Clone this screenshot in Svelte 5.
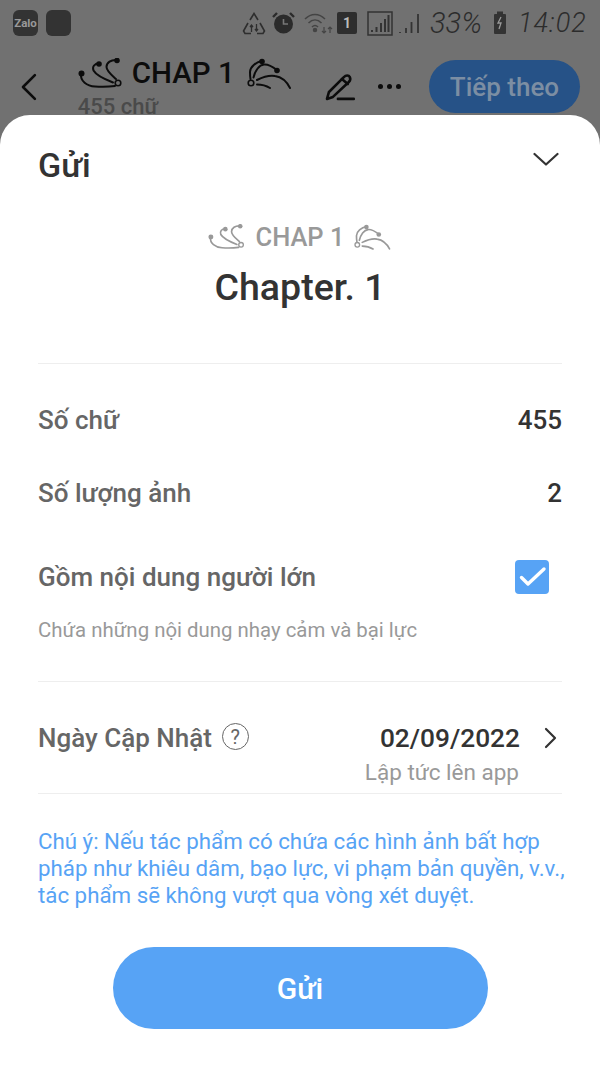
<script lang="ts">
	const rows = [
		{ label: "Số chữ", value: "455" },
		{ label: "Số lượng ảnh", value: "2" }
	];
</script>

{#snippet flourishLeft(w, h)}
	<svg class="flourish" width={w} height={h} viewBox="0 0 46 31" fill="none" stroke="currentColor" stroke-width="2" stroke-linecap="round">
		<circle cx="3.500" cy="15.500" r="3" fill="currentColor" stroke="none" />
		<path d="M3 16c-1 7 6 12 14 12.500 7 .5 14 .3 20-.5" />
		<circle cx="21" cy="6" r="2.800" fill="currentColor" stroke="none" />
		<path d="M21 5.500c-4.500 0-7 3-5.500 7C18 17 26 21 35 24.500" />
		<circle cx="39" cy="2.500" r="2.800" fill="currentColor" stroke="none" />
		<path d="M39 2c-6-.5-10.500 2.500-10.500 7 0 4 5 8 9.500 12" />
		<circle cx="40" cy="25" r="2.800" stroke-width="1.600" />
	</svg>
{/snippet}

{#snippet flourishRight(w, h)}
	<svg class="flourish" width={w} height={h} viewBox="0 0 46 31" fill="none" stroke="currentColor" stroke-width="2" stroke-linecap="round">
		<circle cx="15" cy="3.500" r="2.800" fill="currentColor" stroke="none" />
		<path d="M15 3C9 4 3 9 3 14c0 3 0 5 .5 7" />
		<circle cx="30" cy="12.500" r="2.800" fill="currentColor" stroke="none" />
		<path d="M30 12c-4-3-9-6-13-5.500C12 7 8 13 6.500 19.500" />
		<path d="M10 22c6-3 12-5 18-4 7 1 12 6 15 12" />
		<path d="M10 26.500c5 0 9 1 13 3.500" />
		<circle cx="4" cy="25" r="2.800" stroke-width="1.600" />
	</svg>
{/snippet}

<div class="screen">
	<div class="status">
		<div class="status-left">
			<span class="app-icon">Zalo</span>
			<span class="app-icon square"></span>
		</div>
		<div class="status-right">
			<svg class="recycle" width="24" height="23" viewBox="0 0 24 23" fill="none" stroke="#2e2e2e" stroke-width="1.600">
				<path d="M8 8l4-6.500L16 8M6 11l-4.500 8 1.500 2.500h6M18 11l4.500 8-1.500 2.500h-6" />
				<path d="M9.500 20v-7M8 15l1.500-2 1.500 2M14.500 12v7M13 17l1.500 2 1.500-2" stroke-width="1.300" />
			</svg>
			<svg class="alarm" width="23" height="24" viewBox="0 0 23 24">
				<circle cx="11.500" cy="13" r="9.500" fill="#2b2b2b" />
				<path d="M1 6l4-4M22 6l-4-4" stroke="#2b2b2b" stroke-width="2.400" />
				<path d="M11.500 8v5h4.500" stroke="#777" stroke-width="1.600" fill="none" />
			</svg>
			<svg class="wifi" width="29" height="22" viewBox="0 0 29 22" fill="none" stroke="#444" stroke-width="1.500">
				<path d="M1 7c6-6 14-6 20 0M4.500 11c4-4 9-4 13 0M8 15c2-2 4-2 6 0" />
				<circle cx="11" cy="18" r="1.500" fill="#444" />
				<path d="M20 15v6M18 19l2 2 2-2M26 21v-6M24 17l2-2 2 2" stroke-width="1.200" />
			</svg>
			<span class="sim">1</span>
			<svg class="bars" width="26" height="25" viewBox="0 0 26 25" fill="none">
				<rect x="1" y="1" width="24" height="23" stroke="#333" stroke-width="1.500" />
				<path d="M5 21v-2M9.500 21v-5M14 21v-9M18 21V8M21.500 21V4" stroke="#333" stroke-width="2" />
			</svg>
			<svg class="signal" width="22" height="24" viewBox="0 0 22 24" fill="none" stroke="#333" stroke-width="1.800">
				<path d="M2 22v-1M8 22v-5M13.500 22V11M20 22V3" />
			</svg>
			<span class="hand pct">33%</span>
			<svg class="battery" width="14" height="24" viewBox="0 0 14 24">
				<rect x="1" y="3" width="12" height="20" rx="1" fill="#333" />
				<rect x="4" y="0.500" width="6" height="3" fill="#333" />
				<path d="M8 6l-3 6h3l-2 6" stroke="#999" stroke-width="1.300" fill="none" />
			</svg>
			<span class="hand time">14:02</span>
		</div>
	</div>

	<nav class="topbar">
		<svg class="back" width="18" height="28" viewBox="0 0 18 28" fill="none" stroke="#0c0c0c" stroke-width="2.600" stroke-linecap="round" stroke-linejoin="round">
			<path d="M15 2L3 14l12 12" />
		</svg>
		<div class="title-box">
			<div class="title">
				{@render flourishLeft(46, 31)}
				<span>CHAP 1</span>
				{@render flourishRight(46, 31)}
			</div>
			<div class="count">455 chữ</div>
		</div>
		<svg class="pen" width="32" height="30" viewBox="0 0 32 30" fill="none" stroke="#0c0c0c" stroke-width="2.600" stroke-linejoin="round" stroke-linecap="round">
			<path d="M2 27l2-7L19 5c2-2 5-2 6 0s1 3-1 5L8 25z" />
			<path d="M17 7l6 5" />
			<path d="M13 27h16" />
		</svg>
		<span class="dots"><i></i><i></i><i></i></span>
		<button class="next">Tiếp theo</button>
	</nav>

	<section class="sheet">
		<header class="sheet-head">
			<h1>Gửi</h1>
			<svg width="26" height="14" viewBox="0 0 26 14" fill="none" stroke="#333" stroke-width="2.200" stroke-linecap="round" stroke-linejoin="round">
				<path d="M1.500 2L13 12.500 24.500 2" />
			</svg>
		</header>

		<div class="chapter">
			<div class="chap-line">
				{@render flourishLeft(38, 26)}
				<span>CHAP 1</span>
				{@render flourishRight(38, 26)}
			</div>
			<div class="chap-name">Chapter. 1</div>
		</div>

		<div class="stats">
			{#each rows as row}
				<div class="row">
					<span class="label">{row.label}</span>
					<span class="value">{row.value}</span>
				</div>
			{/each}
			<div class="row adult">
				<span class="label">Gồm nội dung người lớn</span>
				<span class="check">
					<svg width="34" height="34" viewBox="0 0 34 34" fill="none" stroke="#fff" stroke-width="3.400" stroke-linecap="round" stroke-linejoin="round">
						<path d="M6.500 17.500l6.500 6.500L29 9" />
					</svg>
				</span>
			</div>
			<p class="hint">Chứa những nội dung nhạy cảm và bại lực</p>
		</div>

		<div class="date-row">
			<div class="date-label">
				<span class="label">Ngày Cập Nhật</span>
				<span class="help">?</span>
			</div>
			<div class="date-value">
				<div class="date-top">
					<span class="value">02/09/2022</span>
					<svg width="14" height="22" viewBox="0 0 14 22" fill="none" stroke="#333" stroke-width="2.200" stroke-linecap="round" stroke-linejoin="round">
						<path d="M3 2l9 9-9 9" />
					</svg>
				</div>
				<div class="date-sub">Lập tức lên app</div>
			</div>
		</div>

		<p class="note">Chú ý: Nếu tác phẩm có chứa các hình ảnh bất hợp pháp như khiêu dâm, bạo lực, vi phạm bản quyền, v.v., tác phẩm sẽ không vượt qua vòng xét duyệt.</p>

		<button class="send">Gửi</button>
	</section>
</div>

<style>
	:global(body) {
		margin: 0;
		background: #6f6f6f;
	}

	.screen {
		width: 600px;
		height: 1067px;
		display: flex;
		flex-direction: column;
		overflow: hidden;
		background: #717171;
		font-family: Roboto, "Noto Sans", sans-serif;
		color: #333;
	}

	.status {
		height: 46px;
		display: flex;
		justify-content: space-between;
		align-items: center;
		padding: 0 15px 0 13px;
		box-sizing: border-box;
	}

	.status-left {
		display: flex;
		gap: 8px;
	}

	.app-icon {
		width: 25px;
		height: 26px;
		border-radius: 6px;
		background: #333;
		color: #999;
		font-size: 11.500px;
		font-weight: 700;
		display: flex;
		align-items: center;
		justify-content: center;
	}

	.status-right {
		display: flex;
		align-items: center;
	}

	.alarm {
		margin-left: 6px;
	}

	.wifi {
		margin-left: 9px;
	}

	.sim {
		width: 20px;
		height: 22px;
		margin-left: 4px;
		background: #2e2e2e;
		color: #bbb;
		font-size: 14px;
		font-weight: 700;
		border-radius: 2px;
		display: flex;
		align-items: center;
		justify-content: center;
	}

	.bars {
		margin-left: 10px;
	}

	.signal {
		margin-left: 5px;
	}

	.battery {
		margin-left: 9px;
	}

	.hand {
		font-family: Roboto, sans-serif;
		font-weight: 300;
		font-style: italic;
		color: #2c2c2c;
	}

	.pct {
		width: 54px;
		margin-left: 10px;
		font-size: 29px;
		white-space: nowrap;
	}

	.time {
		width: 67px;
		margin-left: 11px;
		font-size: 27px;
		letter-spacing: 1px;
		white-space: nowrap;
	}

	.topbar {
		height: 69px;
		display: flex;
		align-items: center;
		padding: 12px 20px 0;
		box-sizing: border-box;
	}

	.back {
		margin-right: 40px;
	}

	.title-box {
		width: 218px;
		color: #0c0c0c;
		margin-top: -12px;
		align-self: flex-start;
		padding-top: 9px;
	}

	.title {
		display: flex;
		align-items: center;
		gap: 8px;
		font-size: 29.500px;
		font-weight: 500;
		height: 36px;
		white-space: nowrap;
	}

	.title span {
		margin-right: 4px;
	}

	.count {
		font-size: 22px;
		font-weight: 500;
		color: #4a4a4a;
		margin-top: 3px;
	}

	.pen {
		margin-left: 31px;
	}

	.dots {
		display: flex;
		gap: 4px;
		margin-left: 21px;
	}

	.dots i {
		width: 5px;
		height: 5px;
		border-radius: 50%;
		background: #0c0c0c;
	}

	.next {
		margin-left: 28px;
		width: 151px;
		height: 53px;
		flex: none;
		border: 0;
		border-radius: 27px;
		background: #265287;
		color: #7c8ea3;
		font: 500 26px Roboto, sans-serif;
		padding: 0;
	}

	.sheet {
		flex: 1;
		background: #fff;
		border-radius: 30px 30px 0 0;
		padding: 0 38px;
		box-sizing: border-box;
		display: flex;
		flex-direction: column;
	}

	.sheet-head {
		display: flex;
		justify-content: space-between;
		align-items: flex-start;
		height: 79px;
		padding: 30px 3px 0 0;
		box-sizing: border-box;
	}

	.sheet-head svg {
		margin-top: 7px;
	}

	h1 {
		margin: 0;
		font-size: 34px;
		line-height: 40px;
		font-weight: 500;
		color: #333;
	}

	.chapter {
		height: 170px;
		padding-top: 27px;
		box-sizing: border-box;
		border-bottom: 1px solid #eeeeee;
		text-align: center;
	}

	.chap-line {
		display: flex;
		justify-content: center;
		align-items: center;
		gap: 10px;
		height: 32px;
		font-size: 25.500px;
		font-weight: 500;
		color: #999;
	}

	.chap-name {
		font-size: 37.500px;
		font-weight: 500;
		line-height: 44px;
		margin-top: 12px;
		color: #333;
	}

	.stats {
		height: 318px;
		box-sizing: border-box;
		border-bottom: 1px solid #eeeeee;
		padding-top: 36px;
	}

	.row {
		display: flex;
		justify-content: space-between;
		align-items: center;
		height: 40px;
		margin-bottom: 33px;
	}

	.label {
		font-size: 26px;
		font-weight: 500;
		color: #666;
	}

	.value {
		font-size: 26px;
		font-weight: 500;
		color: #333;
	}

	.adult {
		margin-bottom: 0;
		margin-top: 44px;
		padding-right: 13px;
	}

	.check {
		width: 34px;
		height: 34px;
		border-radius: 4px;
		background: #57a3f5;
	}

	.check svg {
		display: block;
	}

	.hint {
		margin: 19px 0 0;
		font-size: 20.400px;
		line-height: 28px;
		color: #999;
	}

	.date-row {
		height: 112px;
		box-sizing: border-box;
		border-bottom: 1px solid #eeeeee;
		display: flex;
		justify-content: space-between;
		padding-top: 41px;
	}

	.date-row .label,
	.date-row .value {
		line-height: 30px;
	}

	.date-row .value {
		font-size: 26.300px;
	}

	.date-label {
		display: flex;
		align-items: flex-start;
		gap: 10px;
	}

	.help {
		width: 25px;
		height: 25px;
		border: 1.500px solid #666;
		border-radius: 50%;
		color: #666;
		font-size: 20px;
		display: flex;
		align-items: center;
		justify-content: center;
	}

	.date-value {
		text-align: right;
	}

	.date-top {
		display: flex;
		align-items: center;
		justify-content: flex-end;
		gap: 23px;
		padding-right: 5px;
	}

	.date-sub {
		font-size: 22.500px;
		line-height: 28px;
		color: #999;
		margin-top: 5px;
		padding-right: 43px;
	}

	.note {
		margin: 34px 0 0;
		width: 540px;
		font-size: 22.300px;
		line-height: 27px;
		color: #57a3f5;
	}

	.send {
		align-self: center;
		width: 375px;
		height: 82px;
		margin-top: 38px;
		border: 0;
		border-radius: 41px;
		background: #57a3f5;
		color: #fff;
		font: 500 30px Roboto, sans-serif;
	}
</style>
